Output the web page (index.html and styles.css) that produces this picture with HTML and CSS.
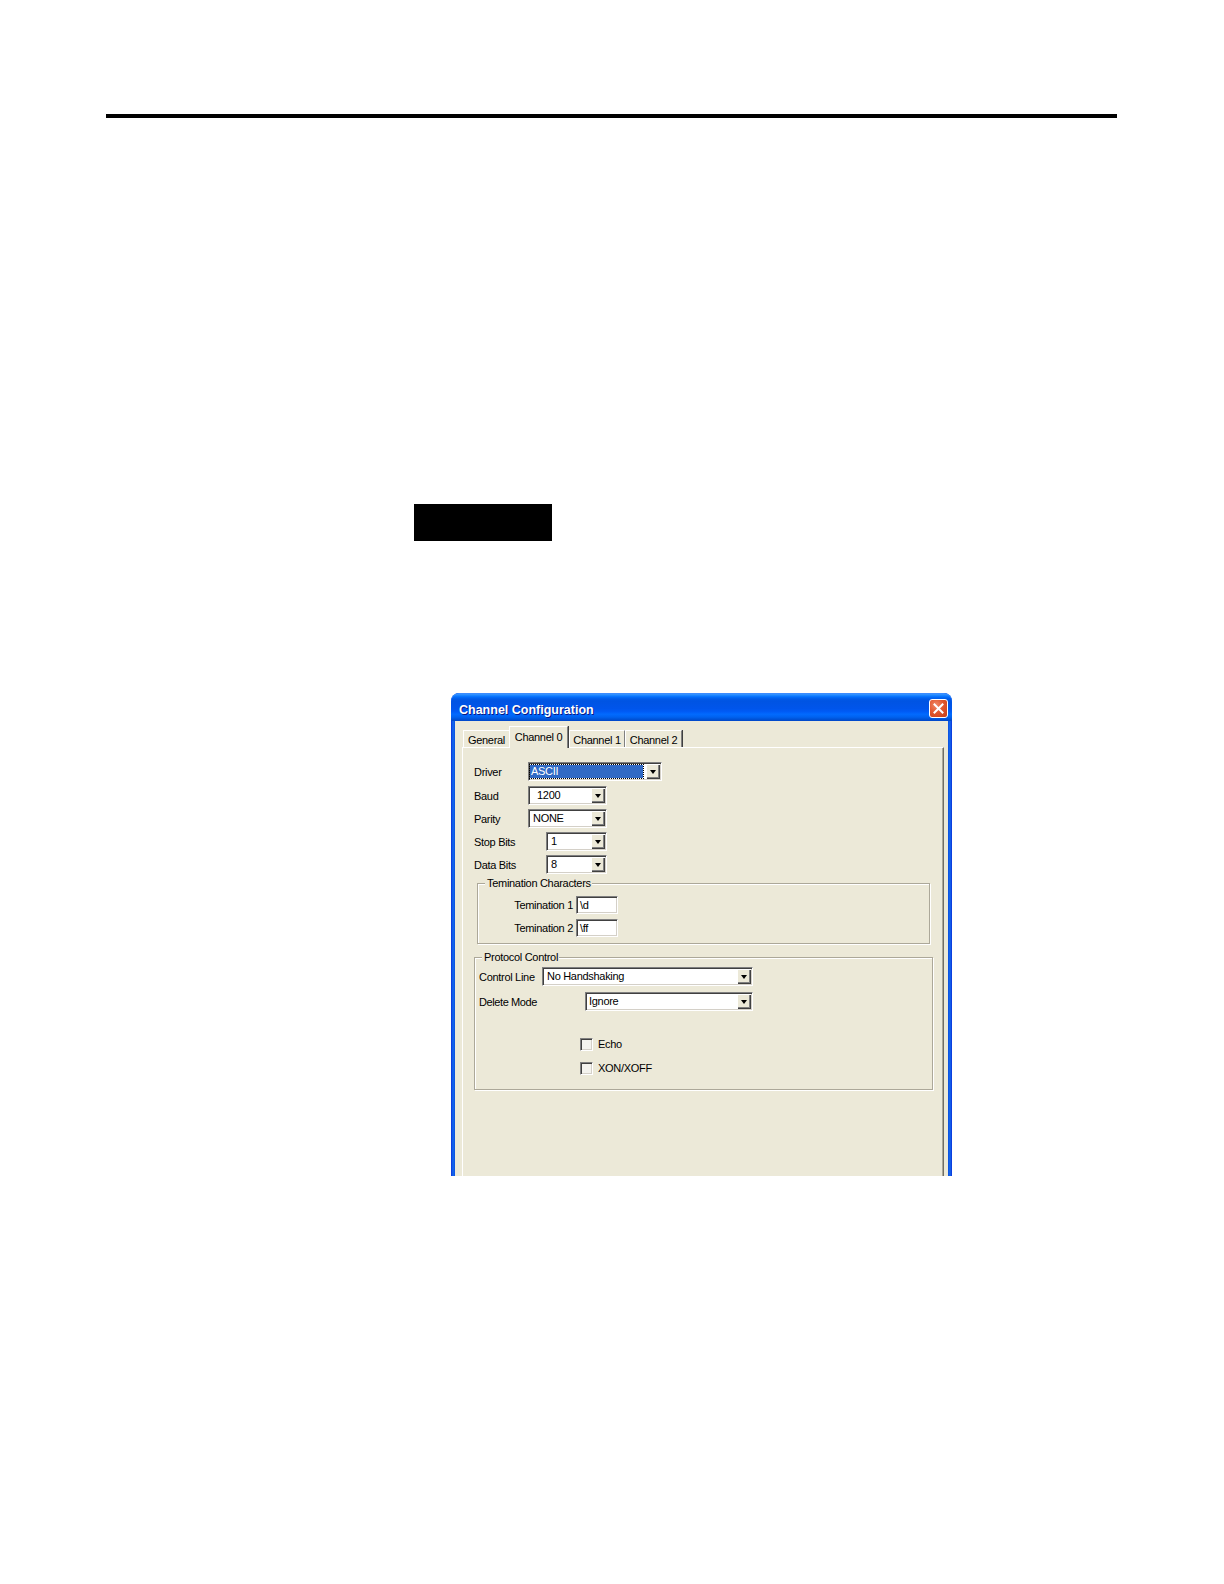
FILE: index.html
```html
<!DOCTYPE html>
<html>
<head>
<meta charset="utf-8">
<link rel="stylesheet" href="styles.css">
</head>
<body>
<div class="page">
  <div class="rule"></div>
  <div class="blackbox"></div>
  <div class="dialog">
    <div class="titlebar">
      <span class="title">Channel Configuration</span>
      <span class="close"><svg width="11" height="11" viewBox="0 0 11 11"><path d="M1.5 1.5 L9.5 9.5 M9.5 1.5 L1.5 9.5" stroke="#fff" stroke-width="2" stroke-linecap="square"/></svg></span>
    </div>
    <div class="body">
      <div class="tabs">
        <div class="tab t-gen">General</div>
        <div class="tab sel t-c0">Channel 0</div>
        <div class="tab t-c1">Channel 1</div>
        <div class="tab t-c2">Channel 2</div>
      </div>
      <div class="panel">
        <div class="row first"><span class="lbl">Driver</span><div class="combo c-driver"><span class="val hl">ASCII</span><span class="btn"></span></div></div>
        <div class="row"><span class="lbl">Baud</span><div class="combo c-short"><span class="val pad8">1200</span><span class="btn"></span></div></div>
        <div class="row"><span class="lbl">Parity</span><div class="combo c-short"><span class="val">NONE</span><span class="btn"></span></div></div>
        <div class="row"><span class="lbl wide">Stop Bits</span><div class="combo c-tiny"><span class="val">1</span><span class="btn"></span></div></div>
        <div class="row"><span class="lbl wide">Data Bits</span><div class="combo c-tiny"><span class="val">8</span><span class="btn"></span></div></div>

        <div class="group g-term">
          <span class="legend">Temination Characters</span>
          <div class="trow"><span class="tlbl">Temination 1</span><span class="tinput">\d</span></div>
          <div class="trow"><span class="tlbl">Temination 2</span><span class="tinput">\ff</span></div>
        </div>

        <div class="group g-proto">
          <span class="legend">Protocol Control</span>
          <div class="prow"><span class="plbl">Control Line</span><div class="combo c-ctl"><span class="val">No Handshaking</span><span class="btn"></span></div></div>
          <div class="prow p2"><span class="plbl l2">Delete Mode</span><div class="combo c-del"><span class="val pad3">Ignore</span><span class="btn"></span></div></div>
          <div class="crow c1"><span class="chk"></span><span class="ctext">Echo</span></div>
          <div class="crow c2"><span class="chk"></span><span class="ctext">XON/XOFF</span></div>
        </div>
      </div>
    </div>
  </div>
</div>
</body>
</html>
```
FILE: styles.css
```css
html, body {
  margin: 0;
  padding: 0;
  background: #fff;
}
.page {
  width: 1224px;
  height: 1584px;
  overflow: hidden;
  font-family: "Liberation Sans", Arial, sans-serif;
}
.rule {
  margin: 114px 0 0 106px;
  width: 1011px;
  height: 4px;
  background: #000;
}
.blackbox {
  margin: 386px 0 0 414px;
  width: 138px;
  height: 37px;
  background: #000;
}
.dialog {
  margin: 152px 0 0 451px;
  width: 501px;
  height: 483px;
  overflow: hidden;
  border-radius: 8px 8px 0 0;
  background: linear-gradient(to right, #0831d9 0, #166aee 2px, #0a4fe0 4px, #0a4fe0 497px, #166aee 499px, #0831d9 501px);
  display: flex;
  flex-direction: column;
  box-sizing: border-box;
}
.titlebar {
  height: 28px;
  flex: none;
  display: flex;
  align-items: flex-start;
  justify-content: space-between;
  padding: 0 4px 0 8px;
  background: linear-gradient(to bottom, #0058ee 0%, #3593ff 4%, #288eff 7%, #127dff 10%, #036ffc 14%, #0262ee 18%, #0057e5 24%, #0054e3 30%, #0055eb 56%, #005bf5 66%, #026afe 76%, #0062ef 86%, #0052d6 94%, #0046c8 100%);
  border-radius: 8px 8px 0 0;
  box-shadow: inset 0 1px 0 #3c8cff;
}
.title {
  margin-top: 10px;
  font-weight: bold;
  font-size: 12.5px;
  line-height: 15px;
  letter-spacing: 0;
  color: #fff;
  text-shadow: 1px 1px 0 #0a1883;
}
.close {
  margin-top: 6px;
  width: 19px;
  height: 19px;
  box-sizing: border-box;
  border: 1px solid #fff;
  border-radius: 3px;
  background: radial-gradient(circle at 35% 30%, #f08a6a 0%, #e2582f 45%, #c73d17 100%);
  display: flex;
  align-items: center;
  justify-content: center;
}
.body {
  flex: 1;
  margin: 0 4px;
  background: #ece9d8;
  display: flex;
  flex-direction: column;
  padding-top: 6px;
}
.tabs {
  display: flex;
  align-items: flex-end;
  padding-left: 8px;
  height: 21px;
  margin-bottom: -1px;
  position: relative;
  z-index: 1;
}
.tab {
  box-sizing: border-box;
  height: 17px;
  margin-bottom: 1px;
  font-size: 11px;
  letter-spacing: -0.3px;
  line-height: 15px;
  padding-top: 2px;
  text-align: center;
  color: #000;
  border-top: 1px solid #fff;
  border-left: 1px solid #fff;
  border-right: 1px solid #808080;
  box-shadow: 1px 0 0 #404040;
  background: #ece9d8;
}
.tab.sel {
  height: 22px;
  margin-bottom: 0;
  padding-top: 3px;
  line-height: 14px;
  margin-right: 1px;
}
.t-gen { width: 46px; border-right: none; box-shadow: none; }
.t-c0 { width: 59px; }
.t-c1 { width: 56px; }
.t-c2 { width: 57px; }
.panel {
  flex: 1;
  margin: 0 4px 0 7px;
  border-top: 1px solid #fff;
  border-left: 1px solid #fff;
  border-right: 1px solid #716f64;
  box-shadow: inset -1px 0 0 #aca899;
  padding-top: 14px;
  font-size: 11px;
  letter-spacing: -0.3px;
  color: #000;
}
.row {
  display: flex;
  align-items: center;
  height: 19px;
  margin-top: 4px;
  padding-left: 11px;
}
.row.first { margin-top: 0; }
.row:nth-child(2) { margin-top: 5px; }
.lbl { width: 54px; flex: none; }
.lbl.wide { width: 72px; }
.combo {
  box-sizing: border-box;
  height: 19px;
  display: flex;
  background: #fff;
  border: 1px solid;
  border-color: #808080 #fff #fff #808080;
  box-shadow: inset 1px 1px 0 #404040, inset -1px -1px 0 #d4d0c8;
  padding: 1px;
  flex: none;
}
.c-driver { width: 134px; }
.c-short { width: 79px; }
.c-tiny { width: 61px; }
.c-ctl { width: 211px; height: 19px; }
.c-del { width: 168px; height: 19px; }
.val {
  flex: 1;
  padding-left: 3px;
  line-height: 15px;
  white-space: nowrap;
  overflow: hidden;
}
.val.pad8 { padding-left: 7px; }
.val.pad3 { padding-left: 2px; }
.val.hl {
  background: #316ac5;
  color: #fff;
  margin: 1px 3px 1px 0;
  padding-left: 1px;
  line-height: 13px;
  outline: 1px dotted #000;
}
.btn {
  width: 14px;
  flex: none;
  position: relative;
  background: #ece9d8;
  box-shadow: inset 1px 1px 0 #fff, inset -1px -1px 0 #404040, inset -2px -2px 0 #808080;
}
.btn::after {
  content: "";
  position: absolute;
  left: 4px;
  top: 6px;
  border-left: 3px solid transparent;
  border-right: 3px solid transparent;
  border-top: 4px solid #000;
}
.group {
  position: relative;
  box-sizing: border-box;
  border: 1px solid #aca899;
  box-shadow: inset 1px 1px 0 #fff, 1px 1px 0 #fff;
}
.legend {
  position: absolute;
  top: -8px;
  background: #ece9d8;
  padding: 0 1px 0 2px;
  line-height: 14px;
  white-space: nowrap;
}
.g-term {
  margin: 9px 0 0 14px;
  width: 453px;
  padding: 12px 0 6px 33px;
}
.g-term .legend { left: 7px; }
.trow {
  display: flex;
  align-items: center;
  height: 18px;
}
.trow + .trow { margin-top: 5px; }
.tlbl { width: 62px; flex: none; text-align: right; margin-right: 3px; white-space: nowrap; }
.tinput {
  box-sizing: border-box;
  width: 42px;
  height: 18px;
  background: #fff;
  border: 1px solid;
  border-color: #808080 #fff #fff #808080;
  box-shadow: inset 1px 1px 0 #404040, inset -1px -1px 0 #d4d0c8;
  padding-left: 3px;
  line-height: 16px;
}
.g-proto {
  margin: 13px 0 0 11px;
  width: 459px;
  padding: 9px 0 14px 4px;
}
.g-proto .legend { left: 7px; }
.prow {
  display: flex;
  align-items: center;
  height: 19px;
}
.prow.p2 { margin-top: 6px; }
.plbl { width: 63px; flex: none; white-space: nowrap; }
.plbl.l2 { width: 106px; letter-spacing: -0.4px; }
.crow {
  display: flex;
  align-items: center;
  height: 13px;
  padding-left: 101px;
}
.crow.c1 { margin-top: 27px; }
.crow.c2 { margin-top: 11px; }
.chk {
  box-sizing: border-box;
  width: 13px;
  height: 13px;
  border: 1px solid;
  border-color: #808080 #fff #fff #808080;
  box-shadow: inset 1px 1px 0 #404040, inset -1px -1px 0 #d4d0c8;
  background: #f4f3ee;
}
.ctext { margin-left: 5px; line-height: 13px; }
```
